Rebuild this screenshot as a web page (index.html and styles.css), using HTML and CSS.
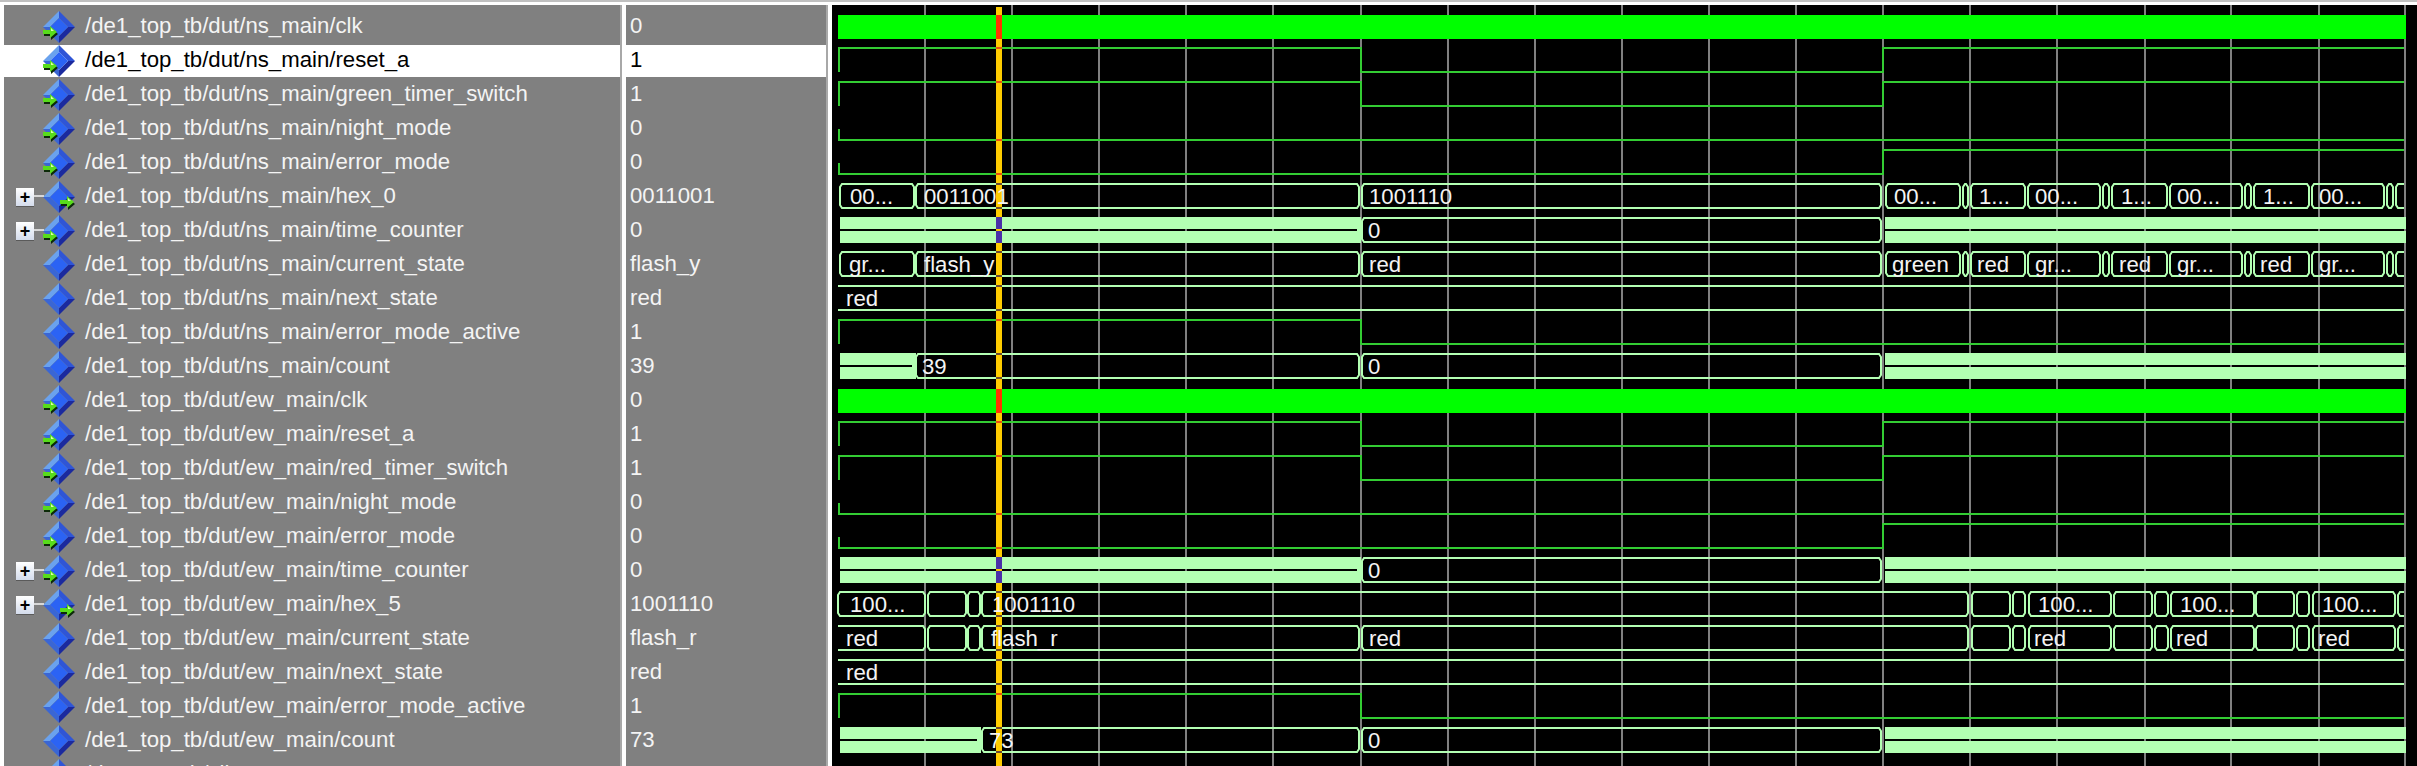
FILE: index.html
```html
<!DOCTYPE html>
<html lang="en">
<head>
    <meta charset="UTF-8">
    <meta name="viewport" content="width=device-width, initial-scale=1.0">
    <title>Wave</title>
    <link rel="stylesheet" href="styles.css">
</head>
<body>
    <svg class="sprites" width="0" height="0">
        <defs>
            <g id="diamond">
                <path fill="#6aa2ee" d="M16 0L0 16L7 16L16 7z"/>
                <path fill="#2f55d6" d="M16 0L32 16L25 16L16 7z"/>
                <path fill="#1b2a9e" d="M32 16L16 32L16 25L25 16z"/>
                <path fill="#3a66d4" d="M0 16L16 32L16 25L7 16z"/>
                <path fill="#2b63f4" d="M16 7L25 16L16 25L7 16z"/>
            </g>
            <g id="arrow">
                <path fill="#0c2a08" d="M1 6H8V2L15 8L8 14V10H1z"/>
                <path fill="#58dc1c" d="M0 4H7V0L14 6L7 12V8H0z"/>
                <path fill="#d8ffa8" d="M1 5H8V2L11 5z"/>
            </g>
            <symbol id="sig-plain" viewBox="0 0 32 32"><use href="#diamond"/></symbol>
            <symbol id="sig-in" viewBox="0 0 32 32"><use href="#diamond"/><use href="#arrow" x="0" y="15"/></symbol>
            <symbol id="sig-out" viewBox="0 0 32 32"><use href="#diamond"/><use href="#arrow" x="17" y="15"/></symbol>
        </defs>
    </svg>

    <div class="window">
        <div class="names">
            <div class="row"><span class="tree"></span><svg class="icon"><use href="#sig-in"/></svg><span>/de1_top_tb/dut/ns_main/clk</span></div>
            <div class="row selected"><span class="tree"></span><svg class="icon"><use href="#sig-in"/></svg><span>/de1_top_tb/dut/ns_main/reset_a</span></div>
            <div class="row"><span class="tree"></span><svg class="icon"><use href="#sig-in"/></svg><span>/de1_top_tb/dut/ns_main/green_timer_switch</span></div>
            <div class="row"><span class="tree"></span><svg class="icon"><use href="#sig-in"/></svg><span>/de1_top_tb/dut/ns_main/night_mode</span></div>
            <div class="row"><span class="tree"></span><svg class="icon"><use href="#sig-in"/></svg><span>/de1_top_tb/dut/ns_main/error_mode</span></div>
            <div class="row"><span class="tree"><span class="plus">+</span></span><svg class="icon"><use href="#sig-out"/></svg><span>/de1_top_tb/dut/ns_main/hex_0</span></div>
            <div class="row"><span class="tree"><span class="plus">+</span></span><svg class="icon"><use href="#sig-in"/></svg><span>/de1_top_tb/dut/ns_main/time_counter</span></div>
            <div class="row"><span class="tree"></span><svg class="icon"><use href="#sig-plain"/></svg><span>/de1_top_tb/dut/ns_main/current_state</span></div>
            <div class="row"><span class="tree"></span><svg class="icon"><use href="#sig-plain"/></svg><span>/de1_top_tb/dut/ns_main/next_state</span></div>
            <div class="row"><span class="tree"></span><svg class="icon"><use href="#sig-plain"/></svg><span>/de1_top_tb/dut/ns_main/error_mode_active</span></div>
            <div class="row"><span class="tree"></span><svg class="icon"><use href="#sig-plain"/></svg><span>/de1_top_tb/dut/ns_main/count</span></div>
            <div class="row"><span class="tree"></span><svg class="icon"><use href="#sig-in"/></svg><span>/de1_top_tb/dut/ew_main/clk</span></div>
            <div class="row"><span class="tree"></span><svg class="icon"><use href="#sig-in"/></svg><span>/de1_top_tb/dut/ew_main/reset_a</span></div>
            <div class="row"><span class="tree"></span><svg class="icon"><use href="#sig-in"/></svg><span>/de1_top_tb/dut/ew_main/red_timer_switch</span></div>
            <div class="row"><span class="tree"></span><svg class="icon"><use href="#sig-in"/></svg><span>/de1_top_tb/dut/ew_main/night_mode</span></div>
            <div class="row"><span class="tree"></span><svg class="icon"><use href="#sig-in"/></svg><span>/de1_top_tb/dut/ew_main/error_mode</span></div>
            <div class="row"><span class="tree"><span class="plus">+</span></span><svg class="icon"><use href="#sig-in"/></svg><span>/de1_top_tb/dut/ew_main/time_counter</span></div>
            <div class="row"><span class="tree"><span class="plus">+</span></span><svg class="icon"><use href="#sig-out"/></svg><span>/de1_top_tb/dut/ew_main/hex_5</span></div>
            <div class="row"><span class="tree"></span><svg class="icon"><use href="#sig-plain"/></svg><span>/de1_top_tb/dut/ew_main/current_state</span></div>
            <div class="row"><span class="tree"></span><svg class="icon"><use href="#sig-plain"/></svg><span>/de1_top_tb/dut/ew_main/next_state</span></div>
            <div class="row"><span class="tree"></span><svg class="icon"><use href="#sig-plain"/></svg><span>/de1_top_tb/dut/ew_main/error_mode_active</span></div>
            <div class="row"><span class="tree"></span><svg class="icon"><use href="#sig-plain"/></svg><span>/de1_top_tb/dut/ew_main/count</span></div>
            <div class="row"><span class="tree"></span><svg class="icon"><use href="#sig-plain"/></svg><span>/de1_top_tb/clk</span></div>
        </div>

        <div class="values">
            <div class="row">0</div>
            <div class="row selected">1</div>
            <div class="row">1</div>
            <div class="row">0</div>
            <div class="row">0</div>
            <div class="row">0011001</div>
            <div class="row">0</div>
            <div class="row">flash_y</div>
            <div class="row">red</div>
            <div class="row">1</div>
            <div class="row">39</div>
            <div class="row">0</div>
            <div class="row">1</div>
            <div class="row">1</div>
            <div class="row">0</div>
            <div class="row">0</div>
            <div class="row">0</div>
            <div class="row">1001110</div>
            <div class="row">flash_r</div>
            <div class="row">red</div>
            <div class="row">1</div>
            <div class="row">73</div>
            <div class="row">U</div>
        </div>

        <svg class="wave" viewBox="832 5 1585 761" width="1585" height="761">
            <defs>
                <path id="clk" class="clock" d="M838 1H2406V25H838z"/>
                <path id="pulse" class="logic" d="M839 24V0H1361V24H1883V0H2404"/>
                <path id="low" class="logic" d="M839 13V24H2404"/>
                <path id="rise" class="logic" d="M839 13V24H1883V0H2404"/>
                <path id="fall" class="logic" d="M839 24V0H1361V24H2404"/>
                <path id="flat" class="bus" d="M838 0H2404M838 24H2404"/>
                <path id="bus-zero" class="bus" d="M1364 0H1879l2 3v18l-2 3H1364l-2-3V3z"/>
                <path id="bar-long" class="bar" d="M840-1H1361V25H840V13H1357V11H840z"/>
                <path id="bar-right" class="bar" d="M1885-1H2406V11H1885zM1885 13H2406V25H1885z"/>
                <path id="bus-ns" class="bus" d="M842 0H912l2 3v18l-2 3H842l-2-3V3z
                    M918 0H1357l2 3v18l-2 3H918l-2-3V3z
                    M1364 0H1879l2 3v18l-2 3H1364l-2-3V3z
                    M1888 0H1958l2 3v18l-2 3H1888l-2-3V3z
                    M1965 0H1966l2 3v18l-2 3H1965l-2-3V3z
                    M1973 0H2023l2 3v18l-2 3H1973l-2-3V3z
                    M2030 0H2098l2 3v18l-2 3H2030l-2-3V3z
                    M2105 0H2107l2 3v18l-2 3H2105l-2-3V3z
                    M2114 0H2165l2 3v18l-2 3H2114l-2-3V3z
                    M2172 0H2240l2 3v18l-2 3H2172l-2-3V3z
                    M2247 0H2249l2 3v18l-2 3H2247l-2-3V3z
                    M2256 0H2307l2 3v18l-2 3H2256l-2-3V3z
                    M2314 0H2382l2 3v18l-2 3H2314l-2-3V3z
                    M2389 0H2391l2 3v18l-2 3H2389l-2-3V3z
                    M2404 0H2398l-2 3v18l2 3H2404"/>
                <path id="bus-ew" class="bus" d="M930 0H964l2 3v18l-2 3H930l-2-3V3z
                    M970 0H978l2 3v18l-2 3H970l-2-3V3z
                    M1974 0H2008l2 3v18l-2 3H1974l-2-3V3z
                    M2015 0H2023l2 3v18l-2 3H2015l-2-3V3z
                    M2031 0H2109l2 3v18l-2 3H2031l-2-3V3z
                    M2116 0H2150l2 3v18l-2 3H2116l-2-3V3z
                    M2157 0H2166l2 3v18l-2 3H2157l-2-3V3z
                    M2173 0H2252l2 3v18l-2 3H2173l-2-3V3z
                    M2258 0H2292l2 3v18l-2 3H2258l-2-3V3z
                    M2299 0H2307l2 3v18l-2 3H2299l-2-3V3z
                    M2315 0H2393l2 3v18l-2 3H2315l-2-3V3z
                    M2404 0H2400l-2 3v18l2 3H2404"/>
            </defs>

            <path class="grid" d="M925 5V766M1012 5V766M1099 5V766M1186 5V766M1273 5V766M1361 5V766M1448 5V766M1535 5V766M1622 5V766M1709 5V766M1796 5V766M1883 5V766M1970 5V766M2057 5V766M2145 5V766M2231 5V766M2319 5V766M2405 5V766"/>

            <!-- ns_main -->
            <use href="#clk" y="14"/>
            <use href="#pulse" y="48"/>
            <use href="#pulse" y="82"/>
            <use href="#low" y="116"/>
            <use href="#rise" y="150"/>
            <use href="#bus-ns" y="184"/>
            <g transform="translate(0 218)">
                <use href="#bar-long"/><use href="#bus-zero"/><use href="#bar-right"/>
            </g>
            <use href="#bus-ns" y="252"/>
            <use href="#flat" y="286"/>
            <use href="#fall" y="320"/>
            <g transform="translate(0 354)">
                <path class="bar" d="M840-1H916V25H840V13H912V11H840z"/>
                <path class="bus" d="M918 0H1357l2 3v18l-2 3H918l-2-3V3z"/>
                <use href="#bus-zero"/><use href="#bar-right"/>
            </g>

            <!-- ew_main -->
            <use href="#clk" y="388"/>
            <use href="#pulse" y="422"/>
            <use href="#pulse" y="456"/>
            <use href="#low" y="490"/>
            <use href="#rise" y="524"/>
            <g transform="translate(0 558)">
                <use href="#bar-long"/><use href="#bus-zero"/><use href="#bar-right"/>
            </g>
            <g transform="translate(0 592)">
                <use href="#bus-ew"/>
                <path class="bus" d="M840 0H923l2 3v18l-2 3H840l-2-3V3zM984 0H1966l2 3v18l-2 3H984l-2-3V3z"/>
            </g>
            <g transform="translate(0 626)">
                <use href="#bus-ew"/>
                <path class="bus" d="M838 0H923l2 3v18l-2 3H838M984 0H1357l2 3v18l-2 3H984l-2-3V3zM1364 0H1966l2 3v18l-2 3H1364l-2-3V3z"/>
            </g>
            <use href="#flat" y="660"/>
            <use href="#fall" y="694"/>
            <g transform="translate(0 728)">
                <path class="bar" d="M840-1H981V25H840V13H977V11H840z"/>
                <path class="bus" d="M984 0H1357l2 3v18l-2 3H984l-2-3V3z"/>
                <use href="#bus-zero"/><use href="#bar-right"/>
            </g>

            <!-- cursor -->
            <rect class="cursor" x="996" y="7" width="6" height="759"/>
            <path class="cursor-clk" d="M996 15h6v24h-6zM996 389h6v24h-6z"/>
            <path class="cursor-bar" d="M996 217h6v12h-6zM996 231h6v12h-6zM996 557h6v12h-6zM996 571h6v12h-6z"/>
            <path class="cursor-logic" d="M996 48h6M996 82h6M996 140h6M996 174h6M996 320h6M996 422h6M996 456h6M996 514h6M996 548h6M996 694h6"/>
            <path class="cursor-bus" d="M996 184h6M996 208h6M996 252h6M996 276h6M996 286h6M996 310h6M996 354h6M996 378h6M996 592h6M996 616h6M996 626h6M996 650h6M996 660h6M996 684h6M996 728h6M996 752h6"/>

            <!-- bus values -->
            <text x="850" y="204">00...</text>
            <text x="924" y="204">0011001</text>
            <text x="1369" y="204">1001110</text>
            <text x="1894" y="204">00...</text>
            <text x="1979" y="204">1...</text>
            <text x="2035" y="204">00...</text>
            <text x="2121" y="204">1...</text>
            <text x="2177" y="204">00...</text>
            <text x="2263" y="204">1...</text>
            <text x="2319" y="204">00...</text>
            <text x="1368" y="238">0</text>
            <text x="849" y="272">gr...</text>
            <text x="924" y="272">flash_y</text>
            <text x="1369" y="272">red</text>
            <text x="1892" y="272">green</text>
            <text x="1977" y="272">red</text>
            <text x="2035" y="272">gr...</text>
            <text x="2119" y="272">red</text>
            <text x="2177" y="272">gr...</text>
            <text x="2260" y="272">red</text>
            <text x="2319" y="272">gr...</text>
            <text x="846" y="306">red</text>
            <text x="922" y="374">39</text>
            <text x="1368" y="374">0</text>
            <text x="1368" y="578">0</text>
            <text x="850" y="612">100...</text>
            <text x="992" y="612">1001110</text>
            <text x="2038" y="612">100...</text>
            <text x="2180" y="612">100...</text>
            <text x="2322" y="612">100...</text>
            <text x="846" y="646">red</text>
            <text x="991" y="646">flash_r</text>
            <text x="1369" y="646">red</text>
            <text x="2034" y="646">red</text>
            <text x="2176" y="646">red</text>
            <text x="2318" y="646">red</text>
            <text x="846" y="680">red</text>
            <text x="989" y="748">73</text>
            <text x="1368" y="748">0</text>
        </svg>
    </div>
</body>
</html>
```

FILE: styles.css
```css
html, body {
    margin: 0;
    padding: 0;
    height: 766px;
    overflow: hidden;
    background-color: #fff;
}

body {
    font-family: "Liberation Sans", Arial, sans-serif;
    font-size: 22.2px;
}

.sprites {
    display: block;
    height: 0;
}

.window {
    display: flex;
    height: 761px;
    padding-left: 4px;
    padding-top: 3px;
    border-top: 2px solid #c0c0c0;
    overflow: hidden;
}

.names, .values {
    display: flex;
    flex-direction: column;
    flex-shrink: 0;
    gap: 2px;
    padding-top: 6px;
    box-sizing: border-box;
    height: 761px;
    overflow: hidden;
    background-color: #808080;
    color: #f4f4f4;
}

.names {
    width: 616px;
    box-shadow: 2px 0 0 #a8a8a8;
    margin-right: 6px;
}

.values {
    width: 200px;
    box-shadow: 2px 0 0 #a8a8a8;
    margin-right: 6px;
}

.row {
    display: flex;
    align-items: center;
    flex-shrink: 0;
    height: 32px;
    white-space: nowrap;
}

.row > span:last-child {
    margin-bottom: 2px;
}

.values .row {
    box-sizing: border-box;
    padding-left: 4px;
    padding-bottom: 2px;
}

.selected {
    background-color: #fff;
    color: #000;
}

.tree {
    display: flex;
    align-items: center;
    flex-shrink: 0;
    width: 27px;
    padding-left: 12px;
}

.plus {
    position: relative;
    display: flex;
    align-items: center;
    justify-content: center;
    width: 18px;
    height: 18px;
    background: linear-gradient(#fff, #d4dcec);
    box-shadow: 0 1px 0 #5a5a5a;
    color: #000;
    font-size: 18px;
    font-weight: bold;
}

.plus::after {
    content: "";
    position: absolute;
    left: 18px;
    top: 7px;
    width: 10px;
    height: 2px;
    background-color: #d8d8d8;
}

.icon {
    flex-shrink: 0;
    width: 32px;
    height: 32px;
    margin-right: 10px;
}

.wave {
    display: block;
    flex-shrink: 0;
    background-color: #000;
}

.wave text {
    fill: #f4f4f4;
    font-size: 22.2px;
}

.grid {
    fill: none;
    stroke: #808080;
    stroke-width: 2;
}

.clock {
    fill: #0f0;
}

.logic {
    fill: none;
    stroke: #33cc33;
    stroke-width: 2;
}

.bus {
    fill: none;
    stroke: #b3ffb3;
    stroke-width: 2;
}

.bar {
    fill: #b3ffb3;
}

.cursor {
    fill: #ffcc00;
}

.cursor-clk {
    fill: #ff3300;
}

.cursor-bar {
    fill: #4a2fa8;
}

.cursor-logic {
    fill: none;
    stroke: #e85010;
    stroke-width: 2;
}

.cursor-bus {
    fill: none;
    stroke: #6b4a30;
    stroke-width: 2;
}
```
